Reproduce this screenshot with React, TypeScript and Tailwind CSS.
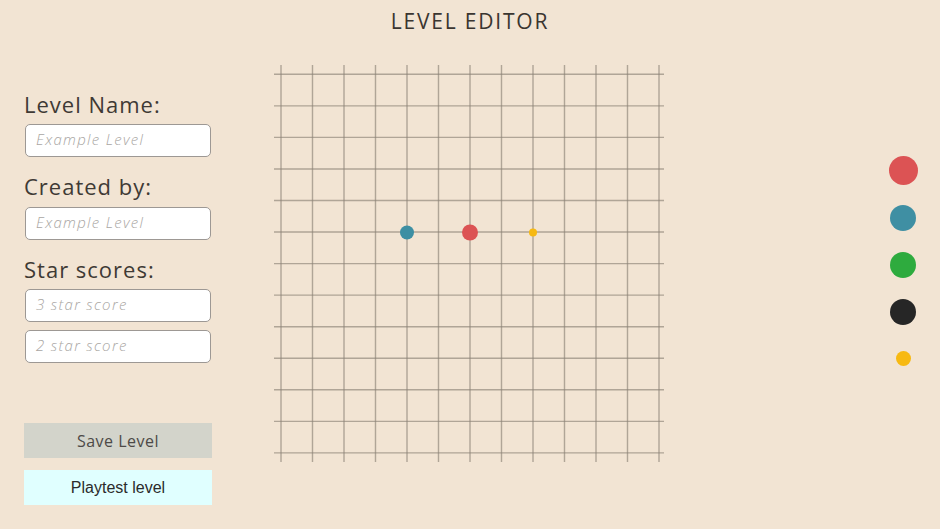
import React from 'react'

const font = { fontFamily: '"Open Sans", Lato, sans-serif' }

const STEP_X = 31.5
const STEP_Y = 31.55

// Grid canvas with the placed pieces
function LevelGrid() {
  const lines = Array.from({ length: 13 }, (_, i) => i)
  return (
    <svg width="392" height="399" viewBox="0 0 392 399" className="mt-[16px] ml-[62px] shrink-0">
      <g stroke="#8c8377" strokeOpacity={0.65} strokeWidth={1.4}>
        {lines.map((i) => (
          <line key={`v${i}`} x1={7 + i * STEP_X} x2={7 + i * STEP_X} y1={1} y2={398} />
        ))}
        {lines.map((j) => (
          <line key={`h${j}`} x1={0} x2={390} y1={10.3 + j * STEP_Y} y2={10.3 + j * STEP_Y} />
        ))}
      </g>
      <circle cx={133} cy={168.5} r={7} fill="#3d8fa3" />
      <circle cx={196} cy={168.5} r={8} fill="#dc5354" />
      <circle cx={259} cy={168.5} r={4} fill="#f7b912" />
    </svg>
  )
}

function Field({ placeholder, className = '' }: { placeholder: string; className?: string }) {
  return (
    <div
      className={`ml-[1px] h-[33px] w-[186px] rounded-[5px] border-[1.5px] border-[#9d9894] bg-white pl-[10px] flex items-center ${className}`}
    >
      <span className="text-[15px] font-light italic tracking-[1.3px] text-[#a9a6a3] -mt-[3px]" style={font}>
        {placeholder}
      </span>
    </div>
  )
}

function Label({ children, className = '' }: { children: React.ReactNode; className?: string }) {
  return (
    <div className={`text-[22px] leading-none tracking-[1px] text-[#3f3a35] ${className}`} style={font}>
      {children}
    </div>
  )
}

const swatches = [
  { color: 'bg-[#dc5354]', size: 'w-[29px] h-[29px]' },
  { color: 'bg-[#3f8fa3]', size: 'w-[26px] h-[26px]' },
  { color: 'bg-[#2eab3e]', size: 'w-[26px] h-[26px]' },
  { color: 'bg-[#262626]', size: 'w-[26px] h-[26px]' },
  { color: 'bg-[#f7b912]', size: 'w-[15px] h-[15px]' },
]

export default function App() {
  return (
    <div className="w-[940px] h-[529px] bg-[#f2e4d3] flex flex-col overflow-hidden">
      <div
        className="pt-[11px] h-[48px] text-center text-[21px] tracking-[1.8px] leading-none text-[#3a3530]"
        style={font}
      >
        LEVEL EDITOR
      </div>

      <div className="flex items-start">
        {/* Level settings */}
        <div className="ml-[24px] mt-[45px] flex flex-col w-[188px]">
          <Label>Level Name:</Label>
          <Field placeholder="Example Level" className="mt-[9px]" />
          <Label className="mt-[18px]">Created by:</Label>
          <Field placeholder="Example Level" className="mt-[10px]" />
          <Label className="mt-[18px]">Star scores:</Label>
          <Field placeholder="3 star score" className="mt-[9px]" />
          <Field placeholder="2 star score" className="mt-[8px]" />

          <button
            className="mt-[60px] h-[35px] w-[188px] bg-[#d3d4cb] text-[16px] tracking-[0.5px] text-[#4d4a47]"
            style={font}
          >
            Save Level
          </button>
          <button
            className="mt-[12px] h-[35px] w-[188px] bg-[#e0ffff] text-[16px] text-[#2b2b2b]"
            style={{ fontFamily: '"Liberation Sans", Arial, sans-serif' }}
          >
            Playtest level
          </button>
        </div>

        <LevelGrid />

        {/* Piece palette */}
        <div className="ml-auto mr-[22px] mt-[99px] w-[30px] flex flex-col items-center">
          {swatches.map((s, i) => (
            <div key={i} className="h-[47px] flex items-center justify-center">
              <div className={`rounded-full ${s.color} ${s.size}`} />
            </div>
          ))}
        </div>
      </div>
    </div>
  )
}
